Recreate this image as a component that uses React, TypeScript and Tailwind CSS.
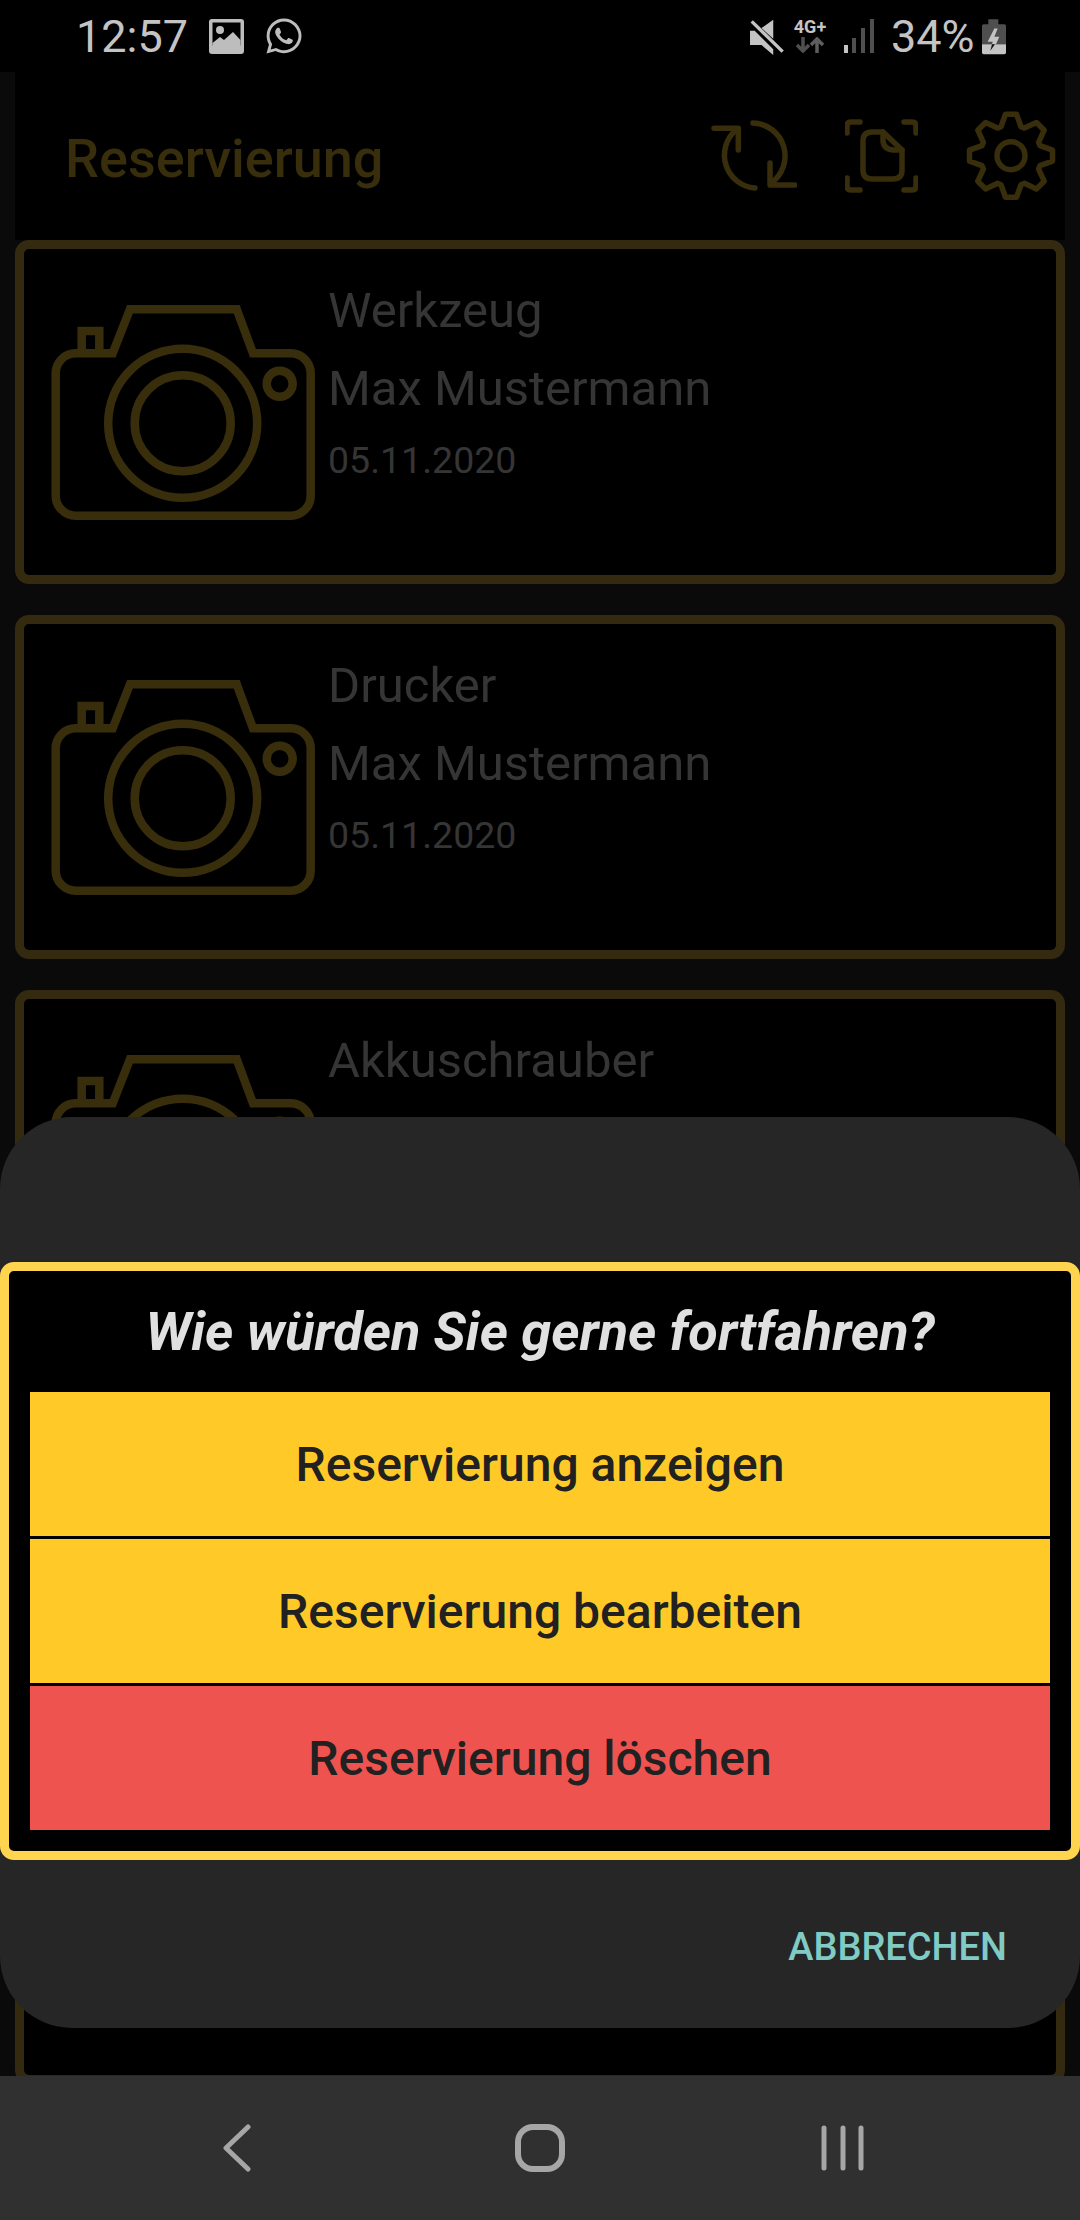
import { FaWhatsapp } from 'react-icons/fa';

type CardProps = {
    title?: string;
    name?: string;
    date?: string;
};

const gearPath = () => {
    const cx = 45;
    const cy = 55.7;
    const parts: string[] = [];
    for (let i = 0; i < 8; i++) {
        const a = (i * Math.PI) / 4 - Math.PI / 2;
        const pt = (r: number, off: number) => {
            const x = cx + r * Math.cos(a) + off * Math.cos(a + Math.PI / 2);
            const y = cy + r * Math.sin(a) + off * Math.sin(a + Math.PI / 2);
            return `${x.toFixed(1)} ${y.toFixed(1)}`;
        };
        parts.push(`${i === 0 ? 'M' : 'L'}${pt(29, -10)}`, `L${pt(41.5, -5.5)}`, `L${pt(41.5, 5.5)}`, `L${pt(29, 10)}`);
    }
    return parts.join(' ') + ' Z';
};

const CameraIcon = () => (
    <svg
        width={288}
        height={235}
        viewBox="0 0 288 235"
        fill="none"
        stroke="#382e0b"
        strokeWidth={8.5}
        className="mt-[46px] shrink-0"
    >
        <path d="M72.7 58.3 L90 14.3 H196.7 L213 58.3 H250.7 A20 20 0 0 1 270.7 78.3 V200.7 A20 20 0 0 1 250.7 220.7 H35.7 A20 20 0 0 1 15.7 200.7 V78.3 A20 20 0 0 1 35.7 58.3 Z" />
        <path d="M41.7 58 V36 H59.3 V58" />
        <circle cx={142.7} cy={128.3} r={74.5} />
        <circle cx={142.7} cy={128.3} r={48} />
        <circle cx={239.7} cy={88.7} r={13} />
    </svg>
);

const Card = ({ title, name, date }: CardProps) => (
    <div className="flex h-[344px] shrink-0 rounded-[14px] border-[9px] border-[#332a10] bg-black pl-4">
        <CameraIcon />
        <div className="pt-[34px] text-[#353535]">
            {title && <p className="text-[49px] leading-[56px]">{title}</p>}
            {name && <p className="mt-[22px] text-[49px] leading-[56px]">{name}</p>}
            {date && <p className="mt-[21px] text-[37.5px] leading-[44px]">{date}</p>}
        </div>
    </div>
);

const StatusBar = () => (
    <div className="flex h-[72px] shrink-0 items-center bg-black pl-[76px] text-[#c4c4c4]">
        <span className="w-[133px] text-[45px] leading-none">12:57</span>
        <svg width={35} height={35} viewBox="0 0 35 35">
            <rect width={35} height={35} rx={3} fill="#bdbdbd" />
            <rect x={3.5} y={3.5} width={28} height={23} fill="#000" />
            <circle cx={11} cy={11} r={4} fill="#bdbdbd" />
            <path d="M3.5 24 L11 18 L15 21 L24 13 L31.5 21 V28 H3.5 Z" fill="#bdbdbd" />
        </svg>
        <FaWhatsapp className="ml-5 text-[40px] text-[#bdbdbd]" />
        <svg width={37} height={37} viewBox="200 50 110 110" className="ml-[444px]">
            <path d="M240 80 L275 55 V112 Z" fill="#c4c4c4" />
            <path d="M206 88 H220 L275 143 V160 L240 130 H206 Z" fill="#c4c4c4" />
            <path d="M211 60 L303 150" stroke="#c4c4c4" strokeWidth={10} />
        </svg>
        <div className="ml-[7px] flex w-[36px] flex-col items-center">
            <span className="text-[18px] leading-[15px] font-bold">4G+</span>
            <svg width={28} height={16} viewBox="0 0 28 16" className="mt-[3px]" fill="none" strokeWidth={3.5}>
                <path d="M7 0 V14 M1 8 L7 14 L13 8" stroke="#4f4f4f" />
                <path d="M21 16 V2 M15 8 L21 2 L27 8" stroke="#5e5e5e" />
            </svg>
        </div>
        <svg width={31} height={36} viewBox="0 0 31 36" className="ml-[15px]">
            <rect x={1} y={27} width={4} height={8} fill="#c4c4c4" />
            <rect x={9} y={20} width={4} height={15} fill="#4f4f4f" />
            <rect x={18} y={10} width={4} height={25} fill="#4f4f4f" />
            <rect x={27} y={1} width={4} height={34} fill="#4f4f4f" />
        </svg>
        <span className="ml-[17px] w-[90px] text-[45px] leading-none">34%</span>
        <svg width={25} height={37} viewBox="900 52 75 110">
            <path d="M922 55 H952 V70 H970 Q975 70 975 75 V130 H903 V75 Q903 70 908 70 H922 Z" fill="#4f4f4f" />
            <path d="M903 130 H975 V155 Q975 160 970 160 H908 Q903 160 903 155 Z" fill="#c4c4c4" />
            <path d="M940 83 L920 123 H935 L933 130 H945 L955 108 H940 L950 83 Z" fill="#c4c4c4" />
            <path d="M933 130 L928 150 L942 130 Z" fill="#111" />
        </svg>
    </div>
);

const Header = () => (
    <div className="flex h-[168px] shrink-0 bg-black pl-[50px] text-[#382e0b]">
        <h1 className="flex-1 pt-[55px] text-[54px] leading-[64px] font-medium">Reservierung</h1>
        <div className="flex items-start gap-12 pt-[12px] pr-[9px]">
            <svg width={86} height={116} viewBox="11 -16 86 116" fill="none" stroke="currentColor" strokeWidth={5.5} strokeLinecap="round" strokeLinejoin="round">
                <path d="M14 28.3 H38.3 V50" />
                <path d="M36 30 A33 33 0 0 0 55 88" />
                <path d="M53 23 A33 33 0 0 1 71 83" />
                <path d="M95 85 H70 V63" />
            </svg>
            <svg width={73} height={116} viewBox="145 -16 73 116" fill="none" stroke="currentColor" strokeWidth={5.5} strokeLinecap="round" strokeLinejoin="round">
                <path d="M147 33 V26 Q147 22 151 22 H160" />
                <path d="M204 22 H212 Q216 22 216 26 V33" />
                <path d="M147 78 V86 Q147 90 151 90 H160" />
                <path d="M204 90 H212 Q216 90 216 86 V78" />
                <path d="M183 32 H172 Q163 32 163 41 V70 Q163 79 172 79 H193 Q202 79 202 70 V50 Z" />
                <path d="M183 32 V40 Q183 49 193 50 H202" />
            </svg>
            <svg width={90} height={116} viewBox="0 -16 90 116" fill="none" stroke="currentColor" strokeWidth={5.5} strokeLinejoin="round">
                <path d={gearPath()} />
                <circle cx={45} cy={55.7} r={14} />
            </svg>
        </div>
    </div>
);

const NavBar = () => (
    <div className="grid h-[144px] shrink-0 grid-cols-[303px_303px_303px] items-center justify-center justify-items-center bg-[#303030]">
        <svg width={28} height={48} viewBox="0 0 28 48" fill="none" stroke="#a6a6a6" strokeWidth={5} strokeLinecap="round" strokeLinejoin="round">
            <path d="M25 3 L3 24 L25 45" />
        </svg>
        <svg width={50} height={48} viewBox="0 0 50 48" fill="none" stroke="#a6a6a6" strokeWidth={6}>
            <rect x={3} y={3} width={44} height={42} rx={15} />
        </svg>
        <svg width={46} height={46} viewBox="0 0 46 46" fill="none" stroke="#a6a6a6" strokeWidth={5} strokeLinecap="round">
            <path d="M4 3 V43 M23 3 V43 M41 3 V43" />
        </svg>
    </div>
);

const ActionButton = ({ label, danger }: { label: string; danger?: boolean }) => (
    <button
        className={
            danger
                ? 'h-[144px] bg-[#ef5350] pt-[2px] text-[48px] font-medium text-[#212121]'
                : 'h-[144px] bg-[#ffca28] pt-[2px] text-[48px] font-medium text-[#212121]'
        }
    >
        {label}
    </button>
);

const ActionSheet = () => (
    <div className="absolute inset-x-0 top-[1117px] h-[911px] rounded-[72px] bg-[#262626] pt-[145px]">
        <div className="rounded-[14px] border-[9px] border-[#ffd54f] bg-black px-[21px] pb-[21px]">
            <h2 className="flex h-[121px] items-center justify-center text-[54px] font-bold text-[#e0e0e0] italic">
                Wie würden Sie gerne fortfahren?
            </h2>
            <div className="flex flex-col gap-[3px]">
                <ActionButton label="Reservierung anzeigen" />
                <ActionButton label="Reservierung bearbeiten" />
                <ActionButton label="Reservierung löschen" danger />
            </div>
        </div>
        <div className="flex justify-end pt-[65px] pr-[73px]">
            <button className="text-[38px] leading-[44px] font-medium text-[#80cbc4]">ABBRECHEN</button>
        </div>
    </div>
);

export default function App() {
    return (
        <div className="relative flex h-[2220px] w-[1080px] flex-col overflow-hidden bg-[#0a0a0a] font-[Roboto,sans-serif]">
            <StatusBar />
            <div className="flex min-h-0 flex-1 flex-col overflow-hidden px-[15px]">
                <Header />
                <div className="flex flex-col gap-[31px]">
                    <Card title="Werkzeug" name="Max Mustermann" date="05.11.2020" />
                    <Card title="Drucker" name="Max Mustermann" date="05.11.2020" />
                    <Card title="Akkuschrauber" />
                    <Card />
                    <Card />
                </div>
            </div>
            <NavBar />
            <ActionSheet />
        </div>
    );
}
